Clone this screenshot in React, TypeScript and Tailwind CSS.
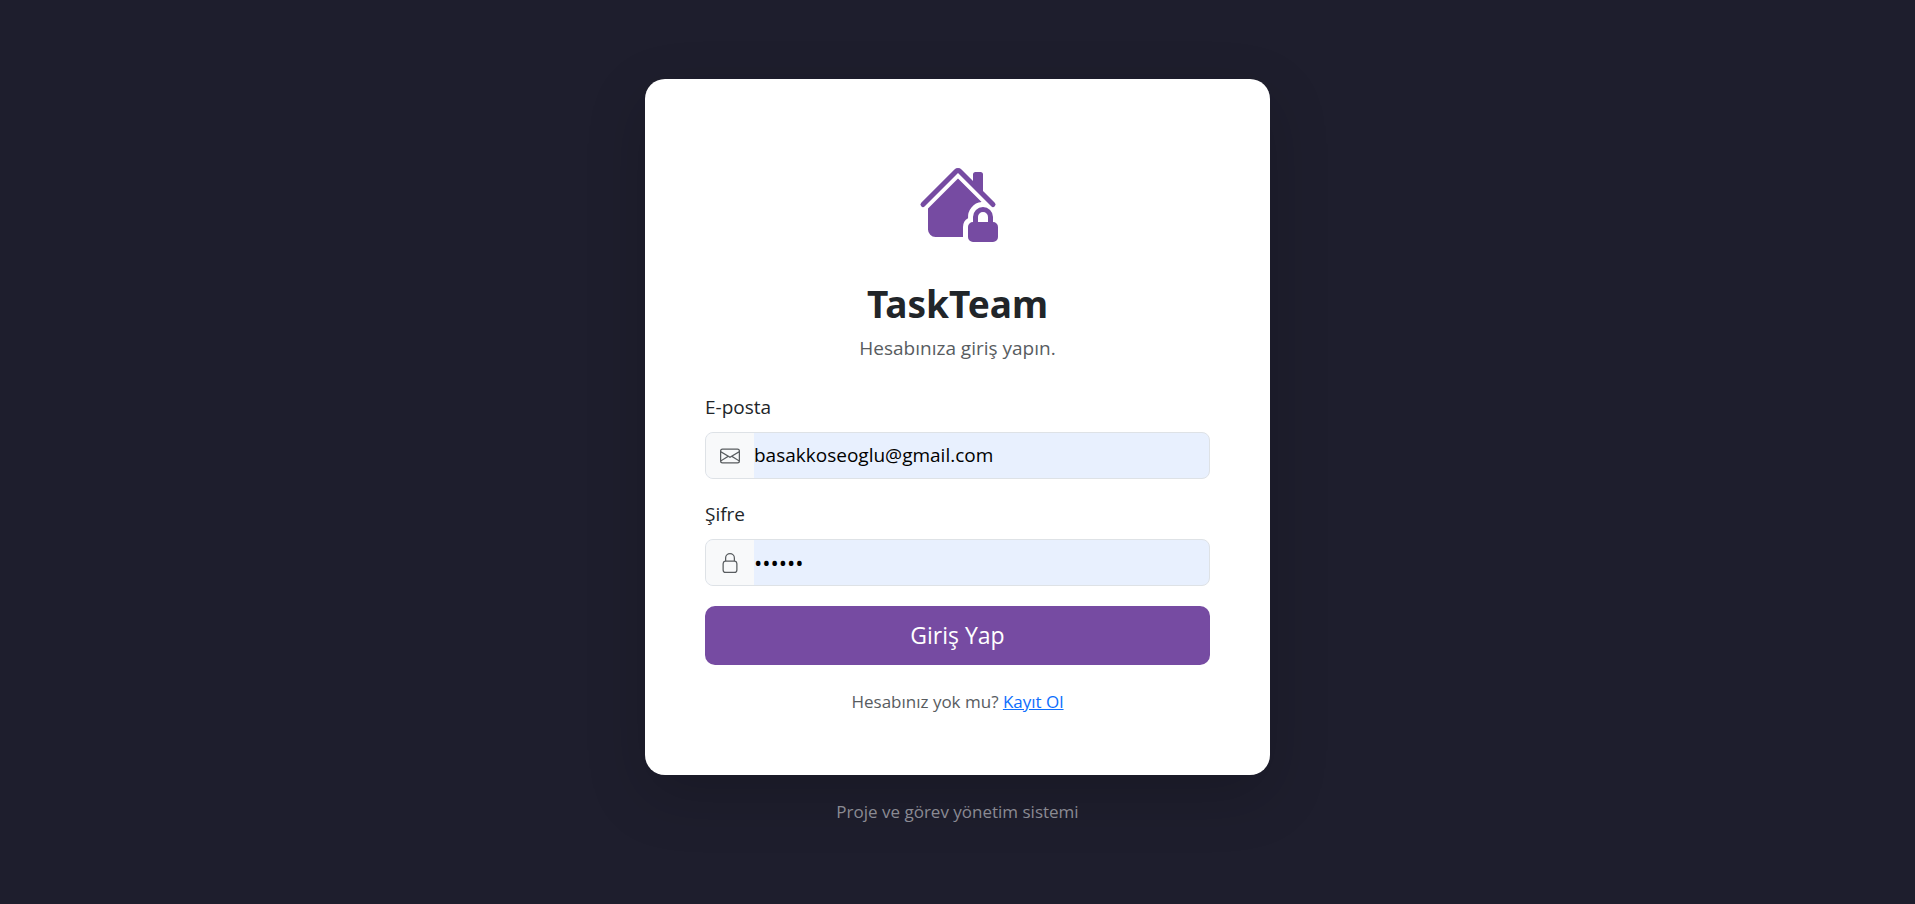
import type { ReactNode } from "react";
import { BsEnvelope, BsHouseLockFill } from "react-icons/bs";

type FieldProps = {
  id: string;
  label: string;
  type: string;
  value: string;
  inputSize: string;
  icon: ReactNode;
};

function LockIcon() {
  return (
    <svg viewBox="0 0 16 16" className="size-5" fill="currentColor" aria-hidden="true">
      <path
        fillRule="evenodd"
        d="M8 0a4 4 0 0 1 4 4v2.05a2.5 2.5 0 0 1 2 2.45v5a2.5 2.5 0 0 1-2.5 2.5h-7A2.5 2.5 0 0 1 2 13.5v-5a2.5 2.5 0 0 1 2-2.45V4a4 4 0 0 1 4-4M4.5 7A1.5 1.5 0 0 0 3 8.5v5A1.5 1.5 0 0 0 4.5 15h7a1.5 1.5 0 0 0 1.5-1.5v-5A1.5 1.5 0 0 0 11.5 7zM8 1a3 3 0 0 0-3 3v2h6V4a3 3 0 0 0-3-3"
      />
    </svg>
  );
}

function Field({ id, label, type, value, inputSize, icon }: FieldProps) {
  return (
    <div className="mb-5">
      <label htmlFor={id} className="mb-[10px] block text-[19px] leading-[30px] text-[#212529]">
        {label}
      </label>
      <div className="flex h-[47px] overflow-hidden rounded-lg border border-[#dee2e6] bg-[#e8f0fe]">
        <span className="flex w-12 items-center justify-center bg-[#f8f9fa] text-[#585c5f]">
          {icon}
        </span>
        <input
          id={id}
          name={id}
          type={type}
          defaultValue={value}
          className={`min-w-0 flex-1 bg-transparent text-black outline-none ${inputSize}`}
        />
      </div>
    </div>
  );
}

export default function App() {
  return (
    <main className="flex min-h-screen flex-col items-center justify-center bg-[#1e1e2d] p-4 font-['Open_Sans','Noto_Sans',sans-serif]">
      <section className="w-full max-w-[625px] rounded-[20px] bg-white p-[60px] shadow-[0_20px_60px_rgba(0,0,0,0.175)]">
        <header className="mb-[29px] flex flex-col items-center pt-[23px] text-center">
          <BsHouseLockFill className="mb-[38px] size-20 text-[#764ba2]" aria-hidden="true" />
          <h1 className="mb-[5px] font-['Noto_Sans',sans-serif] text-[37px] leading-[48px] font-bold text-[#212529]">
            TaskTeam
          </h1>
          <p className="text-[19px] leading-[30px] text-[#585c5f]">Hesabınıza giriş yapın.</p>
        </header>
        <form onSubmit={(event) => event.preventDefault()}>
          <Field
            id="email"
            label="E-posta"
            type="email"
            value="basakkoseoglu@gmail.com"
            inputSize="text-[19px]"
            icon={<BsEnvelope className="size-5" aria-hidden="true" />}
          />
          <Field
            id="password"
            label="Şifre"
            type="password"
            value="123456"
            inputSize="text-[22px]"
            icon={<LockIcon />}
          />
          <button
            type="submit"
            className="block h-[59px] w-full rounded-[10px] bg-[#764ba2] text-[23px] text-white"
          >
            Giriş Yap
          </button>
        </form>
        <p className="mt-6 text-center text-[17px] leading-[26px] text-[#585c5f]">
          Hesabınız yok mu?{" "}
          <a href="#kayit" className="text-[#0d6efd] underline">
            Kayıt Ol
          </a>
        </p>
      </section>
      <p className="mt-6 text-center text-[17px] leading-[26px] text-[#8a8a93]">
        Proje ve görev yönetim sistemi
      </p>
    </main>
  );
}
